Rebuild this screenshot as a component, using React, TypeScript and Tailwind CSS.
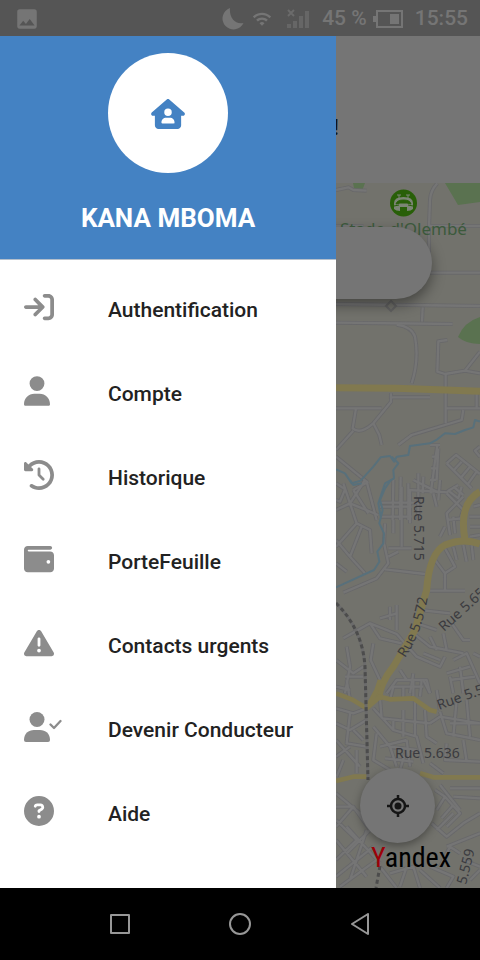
import React from "react";
import {
  FaArrowRightToBracket,
  FaUser,
  FaClockRotateLeft,
  FaWallet,
  FaTriangleExclamation,
  FaCircleQuestion,
  FaHouseUser,
} from "react-icons/fa6";
import { MdWifi, MdImage } from "react-icons/md";

function UserCheck({ className }: { className?: string }) {
  return (
    <svg aria-hidden="true" className={className} viewBox="0 0 38 30" fill="currentColor">
      <circle cx="13" cy="7.500" r="7.500" />
      <path d="M0 28 C0 21.500 4.500 18 10 18 H16 C21.500 18 26 21.500 26 28 Q26 30 24 30 H2 Q0 30 0 28 Z" />
      <path
        d="M26.500 12.500 L30 16 L36.500 9"
        fill="none"
        stroke="currentColor"
        strokeWidth="2.300"
        strokeLinecap="round"
        strokeLinejoin="round"
      />
    </svg>
  );
}

const entries = [
  { label: "Authentification", Icon: FaArrowRightToBracket, size: "w-[30px]" },
  { label: "Compte", Icon: FaUser, size: "w-[26px]" },
  { label: "Historique", Icon: FaClockRotateLeft, size: "w-[30px]" },
  { label: "PorteFeuille", Icon: FaWallet, size: "w-[30px]" },
  { label: "Contacts urgents", Icon: FaTriangleExclamation, size: "w-[30px]" },
  { label: "Devenir Conducteur", Icon: UserCheck, size: "w-[38px]" },
  { label: "Aide", Icon: FaCircleQuestion, size: "w-[30px]" },
];

/* The map is drawn in four tiles, each three units to the pixel. */
const tiles = [
  {
    at: "translate(330 100) scale(0.33333)",
    roads:
      "M18 270 L55 262 L70 270 L110 272 M322 250 Q302 270 300 300 L297 378 M297 378 V515 M300 378 H450 M18 378 H100 M300 518 H450 M18 612 L450 618 M278 622 L276 665 M18 668 L368 672",
    yellow: "",
    river: "",
  },
  {
    at: "translate(330 320) scale(0.33333)",
    roads:
      "M200 14 Q245 20 255 50 Q268 120 245 190 M352 60 L325 64 L322 155 L345 162 L405 152 L450 95 M405 152 L450 160 M347 160 V310 M347 265 H450 M347 222 V200 M183 220 V245 L130 310 L148 345 L155 375 M185 232 H300 M18 265 H155 M78 265 L68 325 Q90 345 130 310 M18 390 L70 332 M18 410 L110 485 L140 600 M205 375 L245 345 L395 300 L400 270 M440 220 V265 M450 380 L435 392 L450 410 M322 375 L302 520 M300 375 H330 M306 410 H326 M303 445 H322 M300 480 H318 M325 385 L320 480 M350 430 L378 405 L450 462 M350 430 L425 505 M372 450 L395 425 M395 470 L420 440 M415 490 L440 455 M385 495 L355 512 L385 535 L395 500 M235 510 L355 517 M190 480 L188 600 M212 470 L210 600 M235 490 L235 600 M265 460 L265 600 M150 548 H265 M18 490 L45 508 L30 545 L18 540 M70 510 L115 485 M70 510 L115 580 M280 470 L278 520 M310 520 L320 560 M350 520 L400 570 L390 600",
    yellow: "M18 203 L200 205 L450 214",
    river:
      "M18 448 L45 460 L65 490 L92 482 L130 440 L152 412 L180 408 L192 425 L200 410 L235 405 L240 378 L300 370 L322 358 L345 340 L375 342 L405 330 L430 322 L435 300 L450 305 M185 410 L205 430 L190 450 L192 475 L165 490 L155 520 L145 550 L152 590",
  },
  {
    at: "translate(330 480) scale(0.33333)",
    roads:
      "M18 90 L60 70 L105 0 M18 200 L80 130 L40 10 M60 70 L145 105 M80 130 L120 150 L125 220 M95 140 L60 230 L18 180 M60 230 L105 280 M18 250 L50 275 M40 338 L140 295 L175 250 L162 190 L165 130 M165 268 L285 282 M190 120 V160 M215 20 V150 M150 80 H245 M150 110 H245 M240 30 V130 M175 205 H245 M175 230 L205 215 M215 150 L215 200 M250 0 L330 40 M330 0 L325 60 M300 332 H405 M345 205 L375 260 L345 280 V330 M315 240 L345 280 M370 200 L380 240 M400 195 L410 245 M425 195 L430 240 M330 170 L345 140 M360 165 L350 100 L400 50 M375 160 L370 110 M350 120 L395 115 M420 170 L450 165 M420 140 H450 M418 110 H450 M430 80 L450 75 M370 20 L400 45 M40 475 L120 430 L200 462 L260 530 L330 560 L345 530 M200 375 V450 M150 415 L200 400 M180 380 V420 M130 490 L122 540 L150 600 M120 430 L150 475 L215 490 M18 540 L70 580 L100 560 M50 500 L60 560 L45 640 M45 590 H100 M18 620 L60 630 M270 390 L360 400 M260 430 L320 450 M250 460 L300 500 L400 520 M300 470 L320 510 M340 460 L350 510 M365 430 L400 480 H420 M280 520 L330 540 M170 640 L200 600 H290 L300 640 M210 570 L230 600 M250 580 L240 640 M275 600 L270 650 M370 540 L410 520 L450 610 M350 580 L420 560 M360 600 L435 590 M370 640 L360 590 M400 640 L390 560 M430 520 L450 530",
    yellow:
      "M145 660 Q150 610 190 560 L255 450 L290 330 Q298 220 345 195 Q400 172 450 192 M405 180 Q385 70 450 35",
    river:
      "M183 0 L165 25 L150 60 L158 90 L148 130 L162 160 L160 190 L142 215 L148 245 L132 270 L18 322 M60 0 L70 15 L95 10",
  },
  {
    at: "translate(330 680) scale(0.33333)",
    roads:
      "M18 85 L70 100 L110 85 M50 0 L60 60 M18 130 L60 150 L110 120 M60 100 L50 190 L110 200 M18 180 L90 260 M18 230 L60 200 M40 240 L20 290 M70 150 L100 180 M80 210 V280 M130 85 L190 150 L260 170 L280 250 M150 55 L155 115 M180 60 L190 20 H280 M220 20 V55 M250 0 V50 M155 115 L300 130 M190 120 V150 M220 90 V170 M255 60 V170 M285 90 L290 170 L320 190 M130 140 L180 200 L260 210 M140 160 L130 240 L180 270 M150 200 L230 180 M165 235 L250 245 M180 200 L200 260 M230 180 L240 260 M210 270 L225 220 M300 130 L330 110 L450 130 M330 95 L350 160 L450 180 M380 60 L370 170 M410 60 L420 170 M360 130 H450 M350 190 L345 240 L450 245 M400 180 L410 245 M300 250 L340 280 M280 0 L300 40 M320 30 L330 90 M360 325 H450 M370 350 L450 355 M315 330 L345 350 L390 400 L350 440 M345 350 L320 390 M370 375 L335 415 M330 315 L390 390 M305 430 L350 470 L400 430 M320 450 L370 400 M350 500 L450 460 M400 430 L450 400 M18 340 L90 400 L160 480 M18 380 L70 380 L18 440 M18 420 L80 480 L18 540 M70 380 L120 450 L50 520 M18 480 L110 590 M50 440 L150 550 M110 450 L60 600 M18 590 L130 500 M30 620 L140 540 M150 560 L200 624 M180 580 L250 560 L270 624 M230 560 L210 620 M270 570 L330 624 M300 560 L370 590 L350 624 M330 560 L360 500 L390 520 M400 540 L450 560 M420 600 L450 570",
    yellow:
      "M18 40 L65 58 L110 85 L150 50 L180 58 L250 55 L300 90 L320 95 M110 85 L140 30 L150 0 M18 303 L70 290 L115 290 M270 280 L310 292 H450",
    river: "",
  },
];

function CityMap() {
  return (
    <svg
      aria-hidden="true"
      className="absolute inset-0 h-full w-full"
      viewBox="0 183 480 705"
      preserveAspectRatio="xMaxYMin slice"
      fill="none"
      fontFamily="'Noto Sans', sans-serif"
    >
      <rect x="0" y="183" width="480" height="705" fill="#72726c" />
      <path d="M445 183 H480 V202 L458 205 Z M353 183 H365 L362 191 L354 188 Z" fill="#5a7250" />
      <path d="M458 337 Q464 322 480 317 V344 Q466 344 458 337 Z" fill="#5a7250" />
      {tiles.map((t) => (
        <path key={t.at} transform={t.at} d={t.roads} stroke="#68686a" strokeWidth="12" strokeLinejoin="round" />
      ))}
      {tiles.map((t) => (
        <path key={t.at} transform={t.at} d={t.roads} stroke="#757575" strokeWidth="7" strokeLinejoin="round" />
      ))}
      {tiles.map((t) => (
        <path key={t.at} transform={t.at} d={t.river} stroke="#58707b" strokeWidth="6" strokeLinejoin="round" />
      ))}
      {tiles.map((t, i) => (
        <path key={t.at} transform={t.at} d={t.yellow} stroke="#81794f" strokeWidth={i === 3 ? 14 : 21} strokeLinejoin="round" />
      ))}
      <path d="M336 603 Q363 630 365 667 L368 780" stroke="#6b6b6b" strokeWidth="3" />
      <path d="M336 603 Q363 630 365 667 L368 780 M380 866 L376 888" stroke="#4c4c4c" strokeWidth="3" strokeDasharray="4 3" />
      <path d="M391 301 l5 5 l-5 5 l-5 -5 Z" fill="#71716b" stroke="#626262" strokeWidth="2" />

      <circle cx="403.5" cy="203" r="13.5" fill="#285f08" />
      <path
        d="M394 203 Q394 197 403.500 197 Q413 197 413 203 V209 Q411 211 407 211 V207 H400 V211 Q396 211 394 209 Z"
        fill="#7b8575"
      />
      <path d="M396 204 Q397 200 403.500 200 Q410 200 411 204 L407 203 H400 Z M394 206 L399 205 M413 206 L408 205" fill="#285f08" stroke="#285f08" />
      <path d="M399 198 V195 M408 198 V195 M397 195 H401 M406 195 H410" stroke="#7b8575" strokeWidth="1" />
      <text x="340" y="235" fontSize="17" fill="#3c5a3c">Stade d'Olembé</text>

      <defs>
        <path id="rue572" d="M405 658 Q425 630 430 580" />
      </defs>
      <g fill="#3b3b3f" fontSize="14">
        <text transform="translate(414 496) rotate(90)">Rue 5.715</text>
        <text><textPath href="#rue572">Rue 5.572</textPath></text>
        <text transform="translate(444 632) rotate(-42)">Rue 5.656</text>
        <text transform="translate(439 710) rotate(-20)">Rue 5.575</text>
        <text x="395" y="758">Rue 5.636</text>
        <text transform="translate(466 885) rotate(-76)">5.559</text>
      </g>
    </svg>
  );
}

function StatusBar() {
  return (
    <header className="flex h-9 items-center bg-[#555555] pt-0.5 pr-3 pl-3.5 text-[21px] font-medium text-[#757575]">
      <MdImage className="h-[26px] w-[26px]" />
      <div className="ml-auto flex items-center">
        <svg aria-hidden="true" className="mr-2 h-[22px] w-[22px]" viewBox="0 0 22 22" fill="currentColor">
          <path d="M8 0 A11 11 0 1 0 21.500 15 C13 17 7 9 8 0 Z" />
        </svg>
        <MdWifi className="mr-3.5 h-5 w-5" />
        <svg aria-hidden="true" className="mr-3 h-5 w-6" viewBox="0 0 24 20" fill="#666666">
          <path d="M1 15 h4 v4 h-4 Z M7 12 h4 v7 h-4 Z M13 7 h4 v12 h-4 Z M19 2 h4 v17 h-4 Z" />
          <path d="M2 1 L8 7 M8 1 L2 7" stroke="#6b6b6b" strokeWidth="2" />
        </svg>
        <span>45 %</span>
        <svg aria-hidden="true" className="mx-1.5 mr-3 h-[18px] w-[30px]" viewBox="0 0 30 18" fill="currentColor">
          <path d="M3 0 H30 V18 H3 V12 H0 V6 H3 Z M5 2 V16 H28 V2 Z" fillRule="evenodd" />
          <rect x="17" y="4" width="9" height="10" />
        </svg>
        <time>15:55</time>
      </div>
    </header>
  );
}

function Drawer() {
  return (
    <aside className="absolute inset-y-0 left-0 w-[70%] bg-white">
      <div className="flex flex-col items-center border-b border-[#b4bfcc] bg-[#4482c3] pt-[17px] pb-6">
        <div className="flex h-[120px] w-[120px] items-center justify-center rounded-full bg-white pt-0.5 text-[#4482c3]">
          <FaHouseUser className="h-[30px] w-[34px]" />
        </div>
        <h1 className="mt-[29px] text-[26px] leading-[33px] font-bold text-white">KANA MBOMA</h1>
      </div>
      <nav className="pt-[9px]">
        {entries.map(({ label, Icon, size }) => (
          <a key={label} href="#" className="flex h-[84px] items-center pl-6 text-[21px] font-medium text-[#222222]">
            <span className="w-[84px] pb-2 text-[#8c8c8c]">
              <Icon className={`h-[30px] ${size}`} />
            </span>
            {label}
          </a>
        ))}
      </nav>
    </aside>
  );
}

export default function App() {
  return (
    <div className="flex min-h-screen flex-col bg-[#757575] font-['Roboto',sans-serif]">
      <StatusBar />
      <main className="relative flex flex-1 flex-col">
        <p className="flex h-[147px] items-center pt-9 pl-[333px] text-[22px] font-medium text-[#111111]">!</p>
        <section className="relative flex flex-1 flex-col justify-between overflow-hidden">
          <CityMap />
          <div className="relative mx-12 mt-11 h-[72px] rounded-full bg-[#757575] shadow-[0_6px_14px_rgba(0,0,0,0.4)]" />
          <div className="relative flex flex-col items-end">
            <button
              type="button"
              aria-label="Ma position"
              className="mr-[45px] flex h-[75px] w-[75px] items-center justify-center rounded-full bg-[#757575] text-[#151515] shadow-[0_3px_8px_rgba(0,0,0,0.35)]"
            >
              <svg aria-hidden="true" className="h-6 w-6" viewBox="0 0 24 24" fill="none" stroke="currentColor" strokeWidth="2.500">
                <circle cx="12" cy="12" r="7" />
                <circle cx="12" cy="12" r="3.500" fill="currentColor" stroke="none" />
                <path d="M12 1 V5 M12 19 V23 M1 12 H5 M19 12 H23" />
              </svg>
            </button>
            <span className="mr-[29px] mb-4 font-['Roboto_Condensed','Liberation_Sans_Narrow',sans-serif] text-[28px] leading-[29px] text-black">
              <span className="text-[#9c0008]">Y</span>andex
            </span>
          </div>
        </section>
        <Drawer />
      </main>
      <footer className="grid h-[72px] grid-cols-3 bg-black px-[60px] text-[#979797]">
        <button type="button" aria-label="Applications récentes" className="flex items-center justify-center">
          <span className="h-5 w-5 rounded-[1px] border-2 border-current" />
        </button>
        <button type="button" aria-label="Accueil" className="flex items-center justify-center">
          <span className="h-[22px] w-[22px] rounded-full border-2 border-current" />
        </button>
        <button type="button" aria-label="Retour" className="flex items-center justify-center">
          <svg aria-hidden="true" className="h-[22px] w-5" viewBox="0 0 20 22" fill="none" stroke="currentColor" strokeWidth="2" strokeLinejoin="round">
            <path d="M18 1 V21 L2 11 Z" />
          </svg>
        </button>
      </footer>
    </div>
  );
}
